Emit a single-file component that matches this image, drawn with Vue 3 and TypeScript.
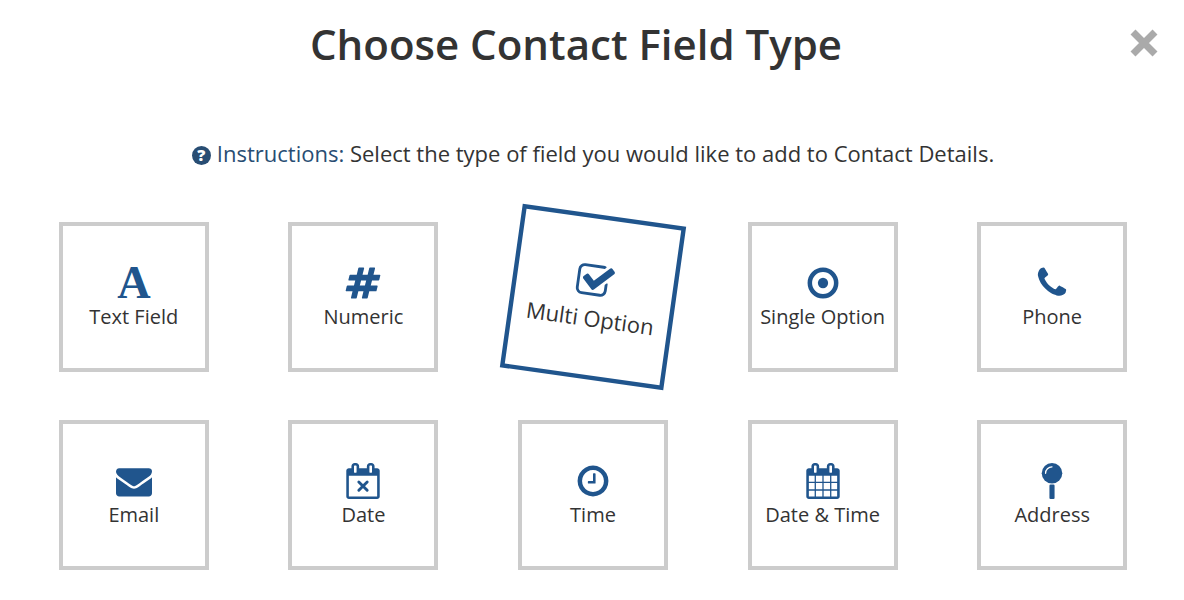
<script setup lang="ts">
import { ref } from 'vue'

interface FieldType {
  id: string
  label: string
  path?: string
}

const calendarShell =
  'M576 448v-288q0-13-9.5-22.5t-22.5-9.5h-64q-13 0-22.5 9.5t-9.5 22.5v288q0 13 9.5 22.5t22.5 9.5h64q13 0 22.5-9.5t9.5-22.5z' +
  'M1344 448v-288q0-13-9.5-22.5t-22.5-9.5h-64q-13 0-22.5 9.5t-9.5 22.5v288q0 13 9.5 22.5t22.5 9.5h64q13 0 22.5-9.5t9.5-22.5zm384-64v1280q0 52-38 90t-90 38h-1408q-52 0-90-38t-38-90v-1280q0-52 38-90t90-38h128v-96q0-66 47-113t113-47h64q66 0 113 47t47 113v96h384v-96q0-66 47-113t113-47h64q66 0 113 47t47 113v96h128q52 0 90 38t38 90z'

const fieldTypes: FieldType[] = [
  { id: 'text', label: 'Text Field' },
  {
    id: 'numeric',
    label: 'Numeric',
    path: 'M991 1024l64-256h-254l-64 256h254zm768-504l-56 224q-7 24-31 24h-327l-64 256h311q15 0 25 12 10 14 6 28l-56 224q-5 24-31 24h-327l-81 328q-7 24-31 24h-224q-16 0-26-12-9-12-6-28l78-312h-254l-81 328q-7 24-31 24h-225q-15 0-25-12-9-12-6-28l78-312h-311q-15 0-25-12-9-12-6-28l56-224q7-24 31-24h327l64-256h-311q-15 0-25-12-10-14-6-28l56-224q5-24 31-24h327l81-328q7-24 32-24h224q15 0 25 12 9 12 6 28l-78 312h254l81-328q7-24 32-24h224q15 0 25 12 9 12 6 28l-78 312h311q15 0 25 12 9 12 6 28z',
  },
  {
    id: 'multi',
    label: 'Multi Option',
    path: 'M1472 930v318q0 119-84.5 203.5t-203.5 84.5h-832q-119 0-203.5-84.5t-84.5-203.5v-832q0-119 84.5-203.5t203.5-84.5h832q63 0 117 25 15 7 18 23 3 17-9 29l-49 49q-10 10-23 10-3 0-9-2-23-6-45-6h-832q-66 0-113 47t-47 113v832q0 66 47 113t113 47h832q66 0 113-47t47-113v-254q0-13 9-22l64-64q10-10 23-10 6 0 12 3 20 8 20 29zm231-489l-814 814q-24 24-57 24t-57-24l-430-430q-24-24-24-57t24-57l110-110q24-24 57-24t57 24l263 263 647-647q24-24 57-24t57 24l110 110q24 24 24 57t-24 57z',
  },
  { id: 'single', label: 'Single Option' },
  {
    id: 'phone',
    label: 'Phone',
    path: 'M1600 1240q0 27-10 70.5t-21 68.5q-21 50-122 106-94 51-186 51-27 0-53-3.5t-57.5-12.5-47-14.5-55.5-20.5-49-18q-98-35-175-83-127-79-264-216t-216-264q-48-77-83-175-3-9-18-49t-20.5-55.5-14.5-47-12.5-57.5-3.5-53q0-92 51-186 56-101 106-122 25-11 68.5-21t70.5-10q14 0 21 3 18 6 53 76 11 19 30 54t35 63.5 31 53.5q3 4 17.5 25t21.5 35.5 7 28.5q0 20-28.5 50t-62 55-62 53-28.5 46q0 9 5 22.5t8.5 20.5 14 24 11.5 19q76 137 174 235t235 174q2 1 19 11.5t24 14 20.5 8.5 22.5 5q18 0 46-28.5t53-62 55-62 50-28.5q14 0 28.5 7t35.5 21.5 25 17.5q25 15 53.5 31t63.5 35 54 30q70 35 76 53 3 7 3 21z',
  },
  {
    id: 'email',
    label: 'Email',
    path: 'M1792 710v794q0 66-47 113t-113 47h-1472q-66 0-113-47t-47-113v-794q44 49 101 87 362 246 497 345 57 42 92.5 65.5t94.5 48 110 24.5h2q51 0 110-24.5t94.5-48 92.5-65.5q170-123 498-345 57-39 100-87zm0-294q0 79-49 151t-122 123q-376 261-468 325-10 7-42.5 31t-54 38.5-52 32.5-57.5 27-50 9h-2q-23 0-50-9t-57.5-27-52-32.5-54-38.5-42.5-31q-91-64-262-182.5t-205-142.5q-62-42-117-115.5t-55-136.5q0-78 41.5-130t118.5-52h1472q65 0 112.5 47t47.5 113z',
  },
  { id: 'date', label: 'Date', path: calendarShell + 'M192 640v1024h1408v-1024z' },
  {
    id: 'time',
    label: 'Time',
    path: 'M1024 544v448q0 14-9 23t-23 9h-320q-14 0-23-9t-9-23v-64q0-14 9-23t23-9h224v-352q0-14 9-23t23-9h64q14 0 23 9t9 23zm416 352q0-148-73-273t-198-198-273-73-273 73-198 198-73 273 73 273 198 198 273 73 273-73 198-198 73-273zm224 0q0 209-103 385.5t-279.5 279.5-385.5 103-385.5-103-279.5-279.5-103-385.5 103-385.5 279.5-279.5 385.5-103 385.5 103 279.5 279.5 103 385.5z',
  },
  {
    id: 'datetime',
    label: 'Date & Time',
    path:
      calendarShell +
      'M192 640h288v288h-288zM544 640h320v288h-320zM928 640h320v288h-320zM1312 640h288v288h-288z' +
      'M192 992h288v320h-288zM544 992h320v320h-320zM928 992h320v320h-320zM1312 992h288v320h-288z' +
      'M192 1376h288v288h-288zM544 1376h320v288h-320zM928 1376h320v288h-320zM1312 1376h288v288h-288z',
  },
  { id: 'address', label: 'Address' },
]

const active = ref('multi')
</script>

<template>
  <main class="dialog" role="dialog" aria-labelledby="dialog-title">
    <header class="header">
      <h1 id="dialog-title" class="title">Choose Contact Field Type</h1>
      <button class="close" type="button" aria-label="Close">
        <svg viewBox="0 0 28 28" aria-hidden="true">
          <path d="M3 3L25 25M25 3L3 25" />
        </svg>
      </button>
    </header>

    <p class="instructions">
      <a class="help" href="#instructions"><span class="help-mark" aria-hidden="true">?</span>Instructions:</a>
      Select the type of field you would like to add to Contact Details.
    </p>

    <div class="grid">
      <button
        v-for="field in fieldTypes"
        :key="field.id"
        type="button"
        class="tile"
        :class="{ active: field.id === active }"
        @click="active = field.id"
      >
        <svg class="icon" viewBox="0 0 1792 1792" aria-hidden="true">
          <path v-if="field.path" :d="field.path" fill-rule="evenodd" />
          <text v-if="field.id === 'text'" class="letter" x="896" y="1664">A</text>
          <path v-if="field.id === 'date'" class="cross" d="M688 944L1104 1360M1104 944L688 1360" />
          <template v-if="field.id === 'single'">
            <circle class="ring" cx="896" cy="896" r="656" />
            <circle cx="896" cy="896" r="256" />
          </template>
          <template v-if="field.id === 'address'">
            <circle cx="896" cy="512" r="512" />
            <path class="shine" d="M576 512A320 320 0 0 1 896 192" />
            <rect x="768" y="1072" width="256" height="720" rx="56" />
          </template>
        </svg>
        <span class="label">{{ field.label }}</span>
      </button>
    </div>
  </main>
</template>

<style>
body {
  margin: 0;
  background: #fff;
}
</style>

<style scoped>
.dialog {
  box-sizing: border-box;
  padding: 14px 17px 30px 19px;
  color: #333;
  font-family: "Open Sans", "Noto Sans", sans-serif;
}

.header {
  display: flex;
  align-items: flex-start;
  padding: 0 9px 0 3px;
}

.title {
  flex: 1;
  margin: 0;
  font-size: 42px;
  font-weight: 600;
  line-height: 60px;
  text-align: center;
}

.close {
  width: 28px;
  height: 28px;
  margin: 15px 0 0;
  padding: 0;
  border: 0;
  background: none;
  cursor: pointer;
}

.close svg {
  display: block;
  width: 28px;
  height: 28px;
  fill: none;
  stroke: #aaa;
  stroke-width: 7;
}

.instructions {
  margin: 63px 0 53px;
  font-size: 22px;
  line-height: 32px;
  text-align: center;
}

.help {
  color: #284d73;
  text-decoration: none;
}

.help-mark {
  display: inline-block;
  width: 19px;
  height: 19px;
  margin-right: 6px;
  border-radius: 50%;
  background: #284d73;
  color: #fff;
  font-size: 16px;
  font-weight: 800;
  line-height: 19px;
  text-align: center;
  vertical-align: 1px;
}

.grid {
  display: grid;
  grid-template-columns: repeat(5, 1fr);
  row-gap: 48px;
  justify-items: center;
}

.tile {
  display: flex;
  flex-direction: column;
  align-items: center;
  gap: 2px;
  box-sizing: border-box;
  width: 150px;
  height: 150px;
  padding: 39px 0 0;
  border: 4px solid #ccc;
  background: #fff;
  color: #333;
  font-family: inherit;
  font-size: 20px;
  line-height: 28px;
  cursor: pointer;
}

.tile.active {
  border-color: #20558d;
  transform: rotate(8deg) scale(1.1);
}

.icon {
  display: block;
  width: 36px;
  height: 36px;
  fill: #20558d;
}

.letter {
  font-family: "Liberation Serif", serif;
  font-size: 2304px;
  font-weight: 700;
  text-anchor: middle;
}

.ring {
  fill: none;
  stroke: #20558d;
  stroke-width: 224;
}

.cross {
  fill: none;
  stroke: #20558d;
  stroke-width: 144;
  stroke-linecap: round;
}

.shine {
  fill: none;
  stroke: #fff;
  stroke-width: 64;
  stroke-linecap: round;
}

.label {
  white-space: nowrap;
}
</style>
